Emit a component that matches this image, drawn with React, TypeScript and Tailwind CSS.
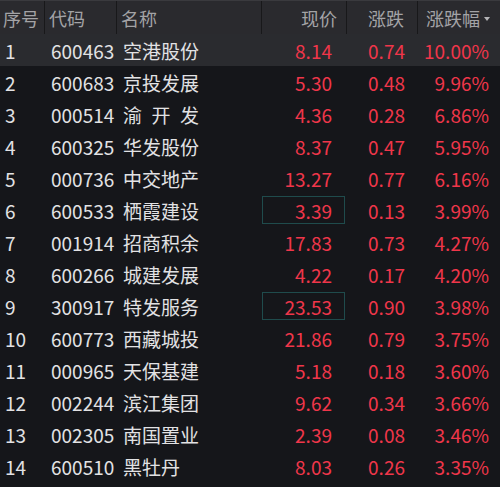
const rows = [
  ['1', '600463', '空港股份', '8.14', '0.74', '10.00%'],
  ['2', '600683', '京投发展', '5.30', '0.48', '9.96%'],
  ['3', '000514', '渝\u2002开\u2002发', '4.36', '0.28', '6.86%'],
  ['4', '600325', '华发股份', '8.37', '0.47', '5.95%'],
  ['5', '000736', '中交地产', '13.27', '0.77', '6.16%'],
  ['6', '600533', '栖霞建设', '3.39', '0.13', '3.99%'],
  ['7', '001914', '招商积余', '17.83', '0.73', '4.27%'],
  ['8', '600266', '城建发展', '4.22', '0.17', '4.20%'],
  ['9', '300917', '特发服务', '23.53', '0.90', '3.98%'],
  ['10', '600773', '西藏城投', '21.86', '0.79', '3.75%'],
  ['11', '000965', '天保基建', '5.18', '0.18', '3.60%'],
  ['12', '002244', '滨江集团', '9.62', '0.34', '3.66%'],
  ['13', '002305', '南国置业', '2.39', '0.08', '3.46%'],
  ['14', '600510', '黑牡丹', '8.03', '0.26', '3.35%'],
]

// rows whose price cell has the teal focus frame
const boxed = ['6', '9']

const cols = 'grid grid-cols-[45px_72px_145px_85px_71px_82px]'

export default function App() {
  return (
    <div
      className="h-[487px] w-[500px] overflow-hidden bg-[#15161a] text-[19px] leading-none"
      style={{ fontFamily: '"Noto Sans CJK SC", "Noto Sans", sans-serif' }}
    >
      {/* Header */}
      <div className={cols + ' h-[34px] border-t border-[#3a3a3e] bg-[#2a2a2e] text-[18px] text-[#a3a3a6]'}>
        <div className="flex items-center border-r border-[#18181a] pl-[3px]">序号</div>
        <div className="flex items-center border-r border-[#18181a] pl-[4px]">代码</div>
        <div className="flex items-center border-r border-[#18181a] pl-[4px]">名称</div>
        <div className="flex items-center justify-end border-r border-[#18181a] pr-[9px]">现价</div>
        <div className="flex items-center justify-end border-r border-[#18181a] pr-[13px]">涨跌</div>
        <div className="flex items-center justify-end pr-[10px]">
          涨跌幅
          <span className="ml-[4px] mt-[2px] h-0 w-0 border-x-[3px] border-t-[4px] border-x-transparent border-t-[#b4b4b7]" />
        </div>
      </div>

      {/* Body */}
      {rows.map(([no, code, name, price, chg, pct], i) => (
        <div
          key={no}
          className={cols + ' h-[32px] ' + (i === 0 ? 'bg-[#2a2b2f]' : '')}
        >
          <div className="flex items-center pl-[5px] text-[#e2e2e4]">{no}</div>
          <div className="flex items-center pl-[6px] text-[#e2e2e4]">{code}</div>
          <div className="flex items-center pl-[6px] text-[#e2e2e4]">{name}</div>
          <div className="flex items-center py-[2px] pr-[2px]">
            <div
              className={
                'flex h-full w-full items-center justify-end pr-[12px] text-[#f0364a] border ' +
                (boxed.includes(no) ? 'border-[#1f4b4c]' : 'border-transparent')
              }
            >
              {price}
            </div>
          </div>
          <div className="flex items-center justify-end pr-[13px] text-[#f0364a]">{chg}</div>
          <div className="flex items-center justify-end pr-[11px] text-[#f0364a]">{pct}</div>
        </div>
      ))}
    </div>
  )
}
